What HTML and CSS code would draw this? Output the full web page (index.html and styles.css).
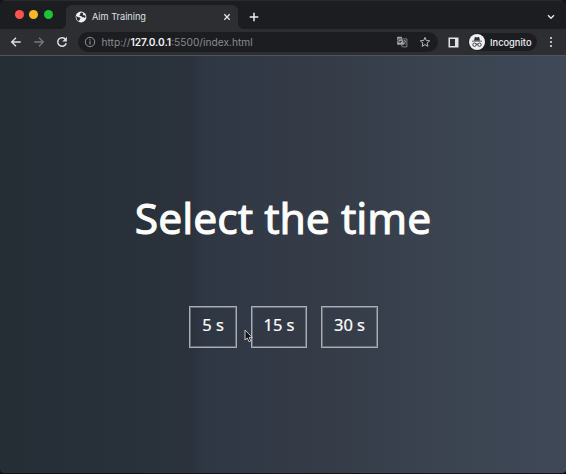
FILE: index.html
```html
<!DOCTYPE html>
<html lang="en">
<head>
<meta charset="utf-8">
<title>Aim Training</title>
<link rel="stylesheet" href="styles.css">
</head>
<body>
<div class="window">
  <header class="tabstrip">
    <div class="lights"><i class="red"></i><i class="yellow"></i><i class="green"></i></div>
    <div class="tab">
      <svg class="globe" viewBox="0 0 12 12" width="12" height="12"><circle cx="6" cy="6" r="5.4" fill="#f1f2f4"/><path d="M1.2 5L3.4 6.2 5.2 6.6 5.4 8 4.3 9 4.2 10.4A5 5 0 0 1 1.2 6ZM6.3 1.4L5 2.8 5.2 4 4 4.8 6.5 5.2 7.3 6.2 9 6.2 9.6 7 10.6 6 10.3 4.4 8.5 4.3 7.8 3.2 8.2 1.9Z" fill="#2d2e32"/></svg>
      <span class="tab-title">Aim Training</span>
      <svg class="close" viewBox="0 0 8 8" width="8" height="8"><path d="M1.3 1.3L6.7 6.7M6.7 1.3L1.3 6.7" stroke="#e4e5e8" stroke-width="1.3"/></svg>
    </div>
    <svg class="plus" viewBox="0 0 10 10" width="10" height="10"><path d="M5 .7V9.3M.7 5H9.3" stroke="#eee" stroke-width="1.5"/></svg>
    <svg class="chevron" viewBox="0 0 8 6" width="8" height="6"><path d="M1 1.3L4 4.3 7 1.3" fill="none" stroke="#e4e5e8" stroke-width="1.4"/></svg>
  </header>
  <nav class="toolbar">
    <svg class="back" viewBox="0 0 12 12" width="12" height="12"><path d="M10.7 6H1.8M6 1.7L1.7 6 6 10.3" fill="none" stroke="#dedfe2" stroke-width="1.4"/></svg>
    <svg class="forward" viewBox="0 0 12 12" width="12" height="12"><path d="M1.3 6H10.2M6 1.7L10.3 6 6 10.3" fill="none" stroke="#77797e" stroke-width="1.3"/></svg>
    <svg class="reload" viewBox="0 0 12 12" width="12" height="12"><path d="M9.6 3.5A4.3 4.3 0 1 0 10.2 7.2" fill="none" stroke="#dedfe2" stroke-width="1.5"/><path d="M10.9 .8V5.4H6.3Z" fill="#dedfe2"/></svg>
    <div class="address">
      <svg class="info" viewBox="0 0 12 12" width="12" height="12"><circle cx="6" cy="6" r="4.7" fill="none" stroke="#929498"/><path d="M6 5.3V8.6M6 3.2V4.4" stroke="#929498" stroke-width="1.1"/></svg>
      <span class="url">http://<b>127.0.0.1</b>:5500/index.html</span>
      <svg class="translate" viewBox="0 0 12 12" width="12" height="12"><path d="M1.2 .8H5.7L8.2 8.8H1.2Z" fill="#a4a6aa"/><path d="M5.4 3.6A1.8 1.8 0 1 0 5.5 5.4H3.8" fill="none" stroke="#25262a" stroke-width=".9"/><path d="M6.7 2.9H10.9V10.9H6.3L5.5 8.8M7.2 5H10M8.5 4V5M9.6 5Q9 7.2 7.8 8M7.7 6L9.8 8.5" fill="none" stroke="#96989c" stroke-width=".8"/></svg>
      <svg class="star" viewBox="0 0 12 12" width="12" height="12"><path d="M6 1.4L7.3 4.5 10.7 4.8 8.1 7 8.9 10.4 6 8.6 3.1 10.4 3.9 7 1.3 4.8 4.7 4.5Z" fill="none" stroke="#b7b8bb"/></svg>
    </div>
    <svg class="panel" viewBox="0 0 11 11" width="11" height="11"><path d="M.5 .5H10.5V10.5H.5ZM2 2V9H7V2Z" fill="#e2e3e6" fill-rule="evenodd"/></svg>
    <div class="profile">
      <svg viewBox="0 0 16 16" width="16" height="16"><circle cx="8" cy="8" r="8" fill="#eff0f2"/><path d="M5 6.5L5.8 3.3Q6.1 2.8 6.8 3.1L8 3.4 9.2 3.1Q9.9 2.8 10.2 3.3L11 6.5ZM3 6.8H13V7.6H3Z" fill="#303135"/><g fill="none" stroke="#303135" stroke-width=".9"><circle cx="5.5" cy="10.7" r="1.7"/><circle cx="10.5" cy="10.7" r="1.7"/><path d="M7 10.3Q8 9.7 9 10.3"/></g></svg>
      <span>Incognito</span>
    </div>
    <svg class="more" viewBox="0 0 4 12" width="4" height="12"><g fill="#dedfe2"><circle cx="2" cy="2" r="1.1"/><circle cx="2" cy="6" r="1.1"/><circle cx="2" cy="10" r="1.1"/></g></svg>
  </nav>
  <main class="screen">
    <h1>Select the time</h1>
    <div class="times">
      <button class="short">5 s</button><button class="medium">15 s</button><button>30 s</button>
    </div>
    <svg class="cursor" viewBox="0 0 9 14" width="9" height="14"><path d="M1 1V11L3.3 9 5 12.8 6.8 12 5.2 8.4H8.2Z" fill="#111216" stroke="#d2d4d8" stroke-width=".9"/></svg>
  </main>
</div>
</body>
</html>
```
FILE: styles.css
```css
* { box-sizing: border-box; }
body { margin: 0; background: #10141b; font-family: Inter, sans-serif; }
svg { display: block; flex: none; }
.window { width: 566px; height: 473px; border-radius: 6px 6px 4px 4px; overflow: hidden; display: flex; flex-direction: column; }
.tabstrip { height: 29px; background: #1c1d20; display: flex; align-items: flex-end; flex: none; box-shadow: inset 0 1px #292a2d; }
.lights { width: 66px; padding: 0 0 10px 15px; display: flex; gap: 5.3px; }
.lights i { width: 9px; height: 9px; border-radius: 50%; }
.red { background: #ff5450; }
.yellow { background: #fdb525; }
.green { background: #1ec337; }
.tab { position: relative; width: 172px; height: 24px; background: #2d2e32; border-radius: 6px 6px 0 0; display: flex; align-items: center; padding: 0 7px 0 9px; }
.tab::before, .tab::after { content: ""; position: absolute; bottom: 0; width: 5px; height: 5px; }
.tab::before { left: -5px; background: radial-gradient(circle at 0 0, transparent 4.5px, #2d2e32 5px); }
.tab::after { right: -5px; background: radial-gradient(circle at 100% 0, transparent 4.5px, #2d2e32 5px); }
.tab-title { margin-left: 5px; color: #dfe0e3; font-size: 9.2px; font-weight: 500; letter-spacing: -.1px; line-height: 12px; flex: 1; white-space: nowrap; }
.tab-title { font-weight: 400; letter-spacing: -.02px; }
.plus { margin: 0 0 7px 11px; }
.chevron { margin: 0 11px 9px auto; }
.toolbar { height: 27px; flex: none; background: #2d2e32; border-bottom: 1px solid #505359; display: flex; align-items: center; padding-left: 10px; }
.forward { margin-left: 11px; }
.reload { margin-left: 11px; }
.address { height: 20px; width: 360px; margin-left: 10px; background: #1c1d20; border-radius: 11px; display: flex; align-items: center; padding: 0 7px 0 6px; }
.url { flex: 1; margin-left: 5.5px; color: #898b8f; font-size: 10.2px; line-height: 14px; white-space: nowrap; }
.url b { color: #f0f1f3; font-weight: 600; }
.star { margin-left: 11px; }
.panel { margin-left: 10px; }
.profile { width: 69px; height: 18px; margin-left: 9px; border-radius: 10px; background: #1c1d20; display: flex; align-items: center; padding-left: 1px; gap: 5px; color: #eeeff1; font-size: 9.3px; font-weight: 500; }
.more { margin-left: 12px; }
.screen { position: relative; flex: 1; display: flex; flex-direction: column; align-items: center; background: linear-gradient(90deg, #252d35 0, #28313a 22%, #2b323c 34%, #303744 36%, #353c48 58%, #3a424f 75%, #3f4957 100%); color: #fff; font-family: "Noto Sans", sans-serif; }
h1 { margin: 131px 0 0; font-size: 42.6px; line-height: 60px; font-weight: 400; -webkit-text-stroke: 1px #fff; white-space: nowrap; }
.times { display: flex; gap: 14px; margin: 59px 0 0 1px; }
button { width: 57px; height: 42px; padding: 0 0 5px; border: 1px solid #a9adb4; box-shadow: inset 0 0 0 1px #a3a7ae80; background: transparent; color: #fff; font: 400 16.5px/24px "Noto Sans", sans-serif; -webkit-text-stroke: .2px #fff; }
.short { width: 48px; }
.medium { width: 56px; }
.cursor { position: absolute; left: 244px; top: 273px; }
```
